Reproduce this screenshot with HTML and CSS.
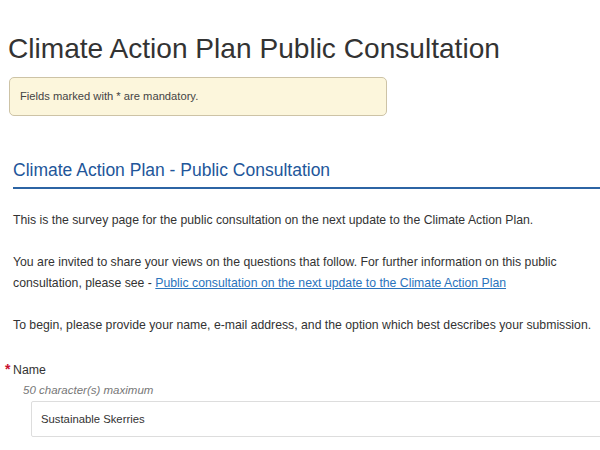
FILE: index.html
```html
<!DOCTYPE html>
<html lang="en">
<head>
<meta charset="utf-8">
<title>Climate Action Plan Public Consultation</title>
<link rel="stylesheet" href="styles.css">
</head>
<body>
<div class="page">
  <h1 class="page-title">Climate Action Plan Public Consultation</h1>
  <div class="notice">Fields marked with * are mandatory.</div>
  <section class="survey">
    <h2 class="section-title">Climate Action Plan - Public Consultation</h2>
    <p class="para">This is the survey page for the public consultation on the next update to the Climate Action Plan.</p>
    <p class="para">You are invited to share your views on the questions that follow. For further information on this public consultation, please see - <a class="link" href="#">Public consultation on the next update to the Climate Action Plan</a></p>
    <p class="para">To begin, please provide your name, e-mail address, and the option which best describes your submission.</p>
    <div class="field">
      <div class="label"><span class="req">*</span>Name</div>
      <div class="hint">50 character(s) maximum</div>
      <div class="input">Sustainable Skerries</div>
    </div>
  </section>
</div>
</body>
</html>
```

FILE: styles.css
```css
html, body {
  margin: 0;
  padding: 0;
  background: #fff;
  overflow: hidden;
}
body {
  font-family: "Liberation Sans", Arial, sans-serif;
  color: #333;
}
.page {
  width: 640px;
  padding: 32px 0 0 8px;
}
.page-title {
  margin: 0;
  font-size: 28.1px;
  font-weight: normal;
  line-height: 34px;
  color: #333;
}
.notice {
  width: 356px;
  margin: 11px 0 0 1px;
  padding: 11px 10px 12px;
  background: #fcf6dc;
  border: 1px solid #cdc3a6;
  border-radius: 5px;
  font-size: 11.2px;
  line-height: 14px;
  color: #444;
}
.survey {
  margin: 43px 0 0 5px;
}
.section-title {
  margin: 0;
  padding-bottom: 6px;
  border-bottom: 2px solid #2c64a4;
  font-size: 17.5px;
  font-weight: normal;
  line-height: 22px;
  color: #22569a;
}
.para {
  margin: 21px 0 0;
  width: 610px;
  font-size: 12.25px;
  line-height: 21px;
  color: #333;
}
.link {
  color: #2a74bd;
  text-decoration: underline;
}
.field {
  margin-top: 25px;
}
.label {
  position: relative;
  font-size: 12.3px;
  line-height: 18px;
  color: #333;
}
.req {
  position: absolute;
  left: -8px;
  top: 1px;
  color: #c8102e;
  font-size: 14px;
  font-weight: bold;
  line-height: 14px;
}
.hint {
  margin: 3px 0 0 10px;
  font-size: 11.5px;
  font-style: italic;
  line-height: 16px;
  color: #777;
}
.input {
  margin: 3px 0 0 18px;
  height: 34px;
  padding: 0 9px;
  border: 1px solid #ddd;
  border-radius: 2px;
  font-size: 11.3px;
  line-height: 34px;
  color: #333;
}
```
